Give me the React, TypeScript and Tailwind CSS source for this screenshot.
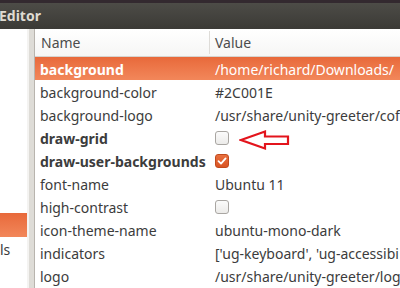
import React from "react";

const font = { fontFamily: '"Noto Sans", "Open Sans", sans-serif' };

type Row = { name: string; value?: string; bold?: boolean; check?: "on" | "off"; selected?: boolean };

const rows: Row[] = [
  { name: "background", value: "/home/richard/Downloads/", bold: true, selected: true },
  { name: "background-color", value: "#2C001E" },
  { name: "background-logo", value: "/usr/share/unity-greeter/cof" },
  { name: "draw-grid", bold: true, check: "off" },
  { name: "draw-user-backgrounds", bold: true, check: "on" },
  { name: "font-name", value: "Ubuntu 11" },
  { name: "high-contrast", check: "off" },
  { name: "icon-theme-name", value: "ubuntu-mono-dark" },
  { name: "indicators", value: "['ug-keyboard', 'ug-accessibi" },
  { name: "logo", value: "/usr/share/unity-greeter/log" },
];

function Check({ on }: { on: boolean }) {
  if (on) {
    return (
      <div className="w-[14px] h-[14px] rounded-[3px] bg-gradient-to-b from-[#e8703f] to-[#d95423] border border-[#c24a1d] flex items-center justify-center">
        <svg width="10" height="10" viewBox="0 0 10 10">
          <path d="M1.5 5.2 L4 7.6 L8.6 2.4" fill="none" stroke="white" strokeWidth="1.8" strokeLinecap="round" strokeLinejoin="round" />
        </svg>
      </div>
    );
  }
  return <div className="w-[14px] h-[14px] rounded-[3px] bg-gradient-to-b from-[#fbfbfb] to-[#ecebe9] border border-[#a9a6a2]" />;
}

export default function App() {
  return (
    <div className="w-[400px] h-[288px] overflow-hidden flex flex-col bg-white" style={font}>
      <div className="h-[29px] shrink-0 border-t-[3px] border-[#33292f] bg-gradient-to-b from-[#4d4c47] to-[#3b3a36] flex items-center">
        <span className="-ml-[1px] text-[14px] font-bold text-[#dfdbd2] leading-none">Editor</span>
      </div>
      <div className="flex-1 flex min-h-0">
        <div className="w-[27px] shrink-0 bg-white flex flex-col pt-[184px] overflow-hidden">
          <div className="h-[24px] bg-gradient-to-b from-[#e8693a] to-[#f2875a]" />
          <div className="h-[24px] flex items-center text-[14px] text-[#3c3c3c] whitespace-nowrap">ls</div>
        </div>
        <div className="w-[8px] shrink-0 border-l-2 border-[#f4f3f1] bg-[#dedcd7] border-r border-r-[#b8b4ae]" />
        <div className="flex-1 flex flex-col min-w-0 relative">
          <div className="h-[28px] shrink-0 flex border-b border-[#d6d4d0] bg-gradient-to-b from-[#ffffff] to-[#f6f6f5] text-[14px] text-[#4c4c4c]">
            <div className="w-[175px] shrink-0 flex items-center pl-[6px] border-r border-[#dedcd8] my-[2px]">Name</div>
            <div className="flex items-center pl-[5px]">Value</div>
          </div>
          {rows.map((r) => (
            <div
              key={r.name}
              className={
                "h-[23px] shrink-0 flex items-center text-[14px] whitespace-nowrap pt-[1px] " +
                (r.selected ? "bg-gradient-to-b from-[#e8693a] to-[#f2875a] text-white" : "text-[#3c3c3c]")
              }
            >
              <div className={"w-[176px] shrink-0 pl-[5px] " + (r.bold ? "font-bold" : "")}>{r.name}</div>
              <div className="pl-[4px] flex items-center">
                {r.check ? <Check on={r.check === "on"} /> : r.value}
              </div>
            </div>
          ))}
          <svg className="absolute left-[204px] top-[100px]" width="52" height="22" viewBox="0 0 52 22">
            <path d="M2 11 L26 2.5 L26 7.5 L49 7.5 L49 15 L26 15 L26 19.5 Z" fill="none" stroke="#e3141c" strokeWidth="2.2" strokeLinejoin="miter" />
          </svg>
        </div>
      </div>
    </div>
  );
}
